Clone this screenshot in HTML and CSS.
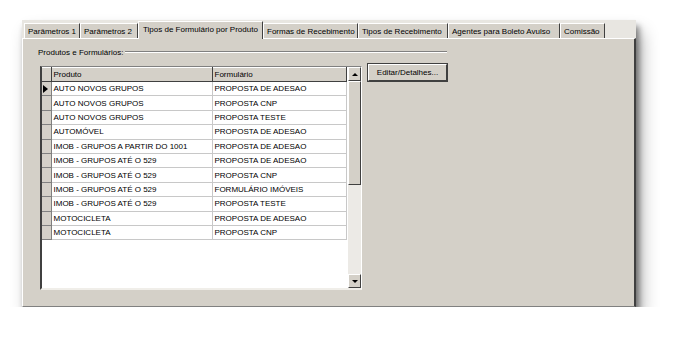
FILE: index.html
```html
<!DOCTYPE html>
<html lang="pt-BR">
<head>
  <meta charset="UTF-8" />
  <title>Tipos de Formulário por Produto</title>
  <link rel="stylesheet" href="styles.css">
</head>
<body>
  <div class="window">
    <div class="tabs">
      <div class="tab w1">Parâmetros 1</div>
      <div class="tab w2">Parâmetros 2</div>
      <div class="tab active w3">Tipos de Formulário por Produto</div>
      <div class="tab w4">Formas de Recebimento</div>
      <div class="tab w5">Tipos de Recebimento</div>
      <div class="tab w6">Agentes para Boleto Avulso</div>
      <div class="tab w7">Comissão</div>
    </div>
    <div class="panel">
      <div class="group-title">
        <span>Produtos e Formulários:</span>
        <div class="group-line"></div>
      </div>
      <div class="content">
        <div class="grid">
          <div class="grid-body">
            <table>
              <tr class="head">
                <th class="ind"></th>
                <th class="col-prod">Produto</th>
                <th class="col-form">Formulário</th>
              </tr>
              <tr><td class="ind current"><span class="arrow"></span></td><td>AUTO NOVOS GRUPOS</td><td>PROPOSTA DE ADESAO</td></tr>
              <tr><td class="ind"></td><td>AUTO NOVOS GRUPOS</td><td>PROPOSTA CNP</td></tr>
              <tr><td class="ind"></td><td>AUTO NOVOS GRUPOS</td><td>PROPOSTA TESTE</td></tr>
              <tr><td class="ind"></td><td>AUTOMÓVEL</td><td>PROPOSTA DE ADESAO</td></tr>
              <tr><td class="ind"></td><td>IMOB - GRUPOS A PARTIR DO 1001</td><td>PROPOSTA DE ADESAO</td></tr>
              <tr><td class="ind"></td><td>IMOB - GRUPOS ATÉ O 529</td><td>PROPOSTA DE ADESAO</td></tr>
              <tr><td class="ind"></td><td>IMOB - GRUPOS ATÉ O 529</td><td>PROPOSTA CNP</td></tr>
              <tr><td class="ind"></td><td>IMOB - GRUPOS ATÉ O 529</td><td>FORMULÁRIO IMÓVEIS</td></tr>
              <tr><td class="ind"></td><td>IMOB - GRUPOS ATÉ O 529</td><td>PROPOSTA TESTE</td></tr>
              <tr><td class="ind"></td><td>MOTOCICLETA</td><td>PROPOSTA DE ADESAO</td></tr>
              <tr><td class="ind"></td><td>MOTOCICLETA</td><td>PROPOSTA CNP</td></tr>
            </table>
          </div>
          <div class="scrollbar">
            <div class="sb-btn"><span class="up"></span></div>
            <div class="sb-thumb"></div>
            <div class="sb-track"></div>
            <div class="sb-btn"><span class="down"></span></div>
          </div>
        </div>
        <button class="btn">Editar/Detalhes...</button>
      </div>
    </div>
  </div>
</body>
</html>
```

FILE: styles.css
```css
body {
  margin: 0;
  background-color: #fff;
  font-family: "Liberation Sans", Arial, sans-serif;
  font-size: 8px;
  color: #000;
}
.window {
  margin: 20px 0 0 22px;
  width: 614px;
  height: 287px;
  background-color: #d4d0c8;
  box-shadow: 3px 6px 6px rgba(0, 0, 0, 0.45), 6px 12px 16px rgba(0, 0, 0, 0.3);
  display: flex;
  flex-direction: column;
}
.tabs {
  display: flex;
  align-items: flex-end;
  height: 18px;
  padding-left: 2px;
  background-color: #e8e6e1;
}
.tab {
  height: 15px;
  line-height: 15px;
  box-sizing: border-box;
  padding-left: 3px;
  white-space: nowrap;
  overflow: hidden;
  border-top: 1px solid #fff;
  border-left: 1px solid #fff;
  border-right: 1px solid #404040;
  background-color: #d4d0c8;
}
.tab.active {
  height: 18px;
  line-height: 15px;
  margin-bottom: -1px;
  position: relative;
  z-index: 1;
  padding-left: 4px;
}
.w1 { width: 56px; }
.w2 { width: 58px; }
.w3 { width: 125px; }
.w4 { width: 95px; }
.w5 { width: 90px; }
.w6 { width: 112px; }
.w7 { width: 45px; }
.panel {
  flex: 1;
  border-top: 1px solid #fff;
  border-left: 1px solid #fff;
  border-right: 2px solid #404040;
  border-bottom: 1px solid #808080;
  padding: 6px 0 0 15px;
}
.group-title {
  display: flex;
  align-items: center;
  width: 409px;
  height: 14px;
}
.group-line {
  flex: 1;
  margin-left: 2px;
  border-top: 1px solid #808080;
  border-bottom: 1px solid #fff;
}
.content {
  display: flex;
  align-items: flex-start;
  margin-top: 7px;
  padding-left: 2px;
}
.grid {
  width: 322px;
  height: 224px;
  box-sizing: border-box;
  border-top: 1px solid #808080;
  border-left: 2px solid #404040;
  border-right: 1px solid #fff;
  border-bottom: 2px solid #f0eee9;
  background-color: #fff;
  display: flex;
}
.grid-body {
  flex: 1;
}
table {
  border-collapse: collapse;
  table-layout: fixed;
}
th, td {
  height: 14.4px;
  padding: 0 0 0 2px;
  text-align: left;
  font-weight: normal;
  white-space: nowrap;
  overflow: hidden;
  border-right: 1px solid #c8c8c8;
  border-bottom: 1px solid #c8c8c8;
  box-sizing: border-box;
}
.head th {
  height: 14px;
  background-color: #d4d0c8;
  border-top: 1px solid #fff;
  border-right: 1px solid #404040;
  border-bottom: 1px solid #404040;
}
.ind {
  width: 9px;
  padding: 0;
  background-color: #d4d0c8;
  border-top: 1px solid #fff;
  border-right: 1px solid #808080;
  border-bottom: 1px solid #808080;
}
.col-prod { width: 161px; }
.col-form { width: 134px; }
.arrow {
  display: inline-block;
  margin-left: 1px;
  border-left: 5px solid #000;
  border-top: 4px solid transparent;
  border-bottom: 4px solid transparent;
  vertical-align: middle;
}
.scrollbar {
  width: 13px;
  display: flex;
  flex-direction: column;
  background-color: #eceae6;
}
.sb-btn, .sb-thumb {
  box-sizing: border-box;
  background-color: #d4d0c8;
  border-top: 1px solid #fff;
  border-left: 1px solid #fff;
  border-right: 1px solid #404040;
  border-bottom: 1px solid #404040;
}
.sb-btn {
  height: 14px;
  display: flex;
  align-items: center;
  justify-content: center;
}
.sb-thumb {
  height: 104px;
}
.sb-track {
  flex: 1;
}
.up, .down {
  width: 0;
  height: 0;
  border-left: 3px solid transparent;
  border-right: 3px solid transparent;
}
.up { border-bottom: 3px solid #000; }
.down { border-top: 3px solid #000; }
.btn {
  margin: -2px 0 0 6px;
  width: 79px;
  height: 17px;
  padding: 0;
  font-family: "Liberation Sans", Arial, sans-serif;
  font-size: 8px;
  color: #000;
  background-color: #d4d0c8;
  border-top: 1px solid #fff;
  border-left: 1px solid #fff;
  border-right: 1px solid #404040;
  border-bottom: 1px solid #404040;
  outline: 1px solid #404040;
  outline-offset: 0;
}
```
